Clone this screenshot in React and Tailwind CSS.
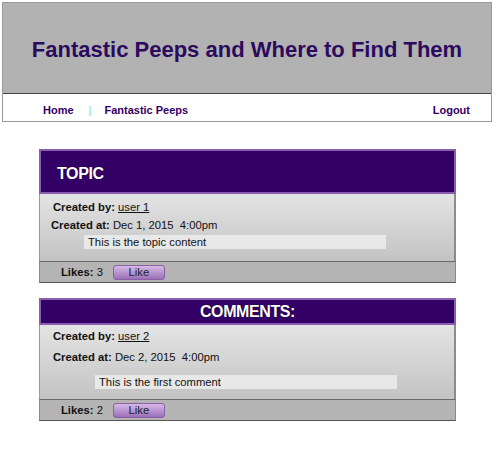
import React from 'react';

const font = { fontFamily: '"Liberation Sans", Arial, sans-serif' };

const LikeBar = ({ likes }) => (
  <div className="h-[22px] flex items-center pl-[21px] bg-[#b4b4b4] border-t border-t-[#6b6b6b] border-x border-x-[#8a8a8a] border-b border-b-[#555]">
    <span className="text-[11.25px] text-[#111]">
      <b>Likes:</b> {likes}
    </span>
    <button className="ml-[10px] w-[52px] h-[15px] rounded-[3px] border border-[#8a5fa6] bg-gradient-to-b from-[#d6bae4] to-[#9c70b8] text-[11.25px] leading-[13px] text-[#222]">
      Like
    </button>
  </div>
);

const Card = ({ title, tall, user, date, content, likes, contentLeft, contentRight }) => (
  <div className="w-[417px]">
    <div
      className={`bg-[#330066] border-2 border-[#8a5cb0] flex items-center ${tall ? 'h-[45px] pl-[16px] pt-[4px]' : 'h-[27px] justify-center'}`}
    >
      <span className="text-white font-bold text-[16px] tracking-tight [text-shadow:0_0_1px_#000]">{title}</span>
    </div>
    <div
      className={`bg-gradient-to-b from-[#e4e4e4] to-[#c3c3c3] border-l border-l-[#9a9a9a] border-r-2 border-r-[#8c8c8c] text-[11.25px] text-[#111] ${tall ? 'h-[67px] pt-[5px]' : 'h-[74px] pt-[3px]'}`}
    >
      <div className="h-[16px] flex items-center pl-[13px]">
        <b>Created by:</b>&nbsp;<span className="underline">{user}</span>
      </div>
      <div className={`flex items-center ${tall ? 'h-[18px] mt-[1px] pl-[11px]' : 'h-[18px] mt-[4px] pl-[13px]'}`}>
        <b>Created at:</b>&nbsp;<span className="whitespace-pre">{date}</span>
      </div>
      <div
        className={`h-[14px] bg-[#e8e8e8] flex items-center pl-[4px] ${tall ? 'mt-[1px]' : 'mt-[9px]'}`}
        style={{ marginLeft: contentLeft, marginRight: contentRight }}
      >
        {content}
      </div>
    </div>
    <LikeBar likes={likes} />
  </div>
);

export default function App() {
  return (
    <div className="w-[500px] h-[450px] bg-white" style={font}>
      <div className="pt-[2px] pl-[2px]">
        <div className="w-[490px] border border-[#9a9a9a]">
          <div className="h-[91px] bg-[#b2b2b2] border-b border-b-[#444] flex items-center justify-center">
            <h1 className="text-[22px] font-bold text-[#2c0a5e] mt-[2px]">Fantastic Peeps and Where to Find Them</h1>
          </div>
          <div className="h-[27px] flex items-center pt-[5px] text-[11px] font-bold text-[#330066] pl-[40px] pr-[21px]">
            <span>Home</span>
            <span className="ml-[15px] text-[#8fd6c2] font-normal">|</span>
            <span className="ml-[13px]">Fantastic Peeps</span>
            <span className="ml-auto">Logout</span>
          </div>
        </div>
      </div>
      <div className="ml-[39px] mt-[27px] flex flex-col gap-[15px]">
        <Card
          title="TOPIC"
          tall
          user="user 1"
          date="Dec 1, 2015  4:00pm"
          content="This is the topic content"
          likes={3}
          contentLeft="44px"
          contentRight="68px"
        />
        <Card
          title="COMMENTS:"
          user="user 2"
          date="Dec 2, 2015  4:00pm"
          content="This is the first comment"
          likes={2}
          contentLeft="55px"
          contentRight="57px"
        />
      </div>
    </div>
  );
}
